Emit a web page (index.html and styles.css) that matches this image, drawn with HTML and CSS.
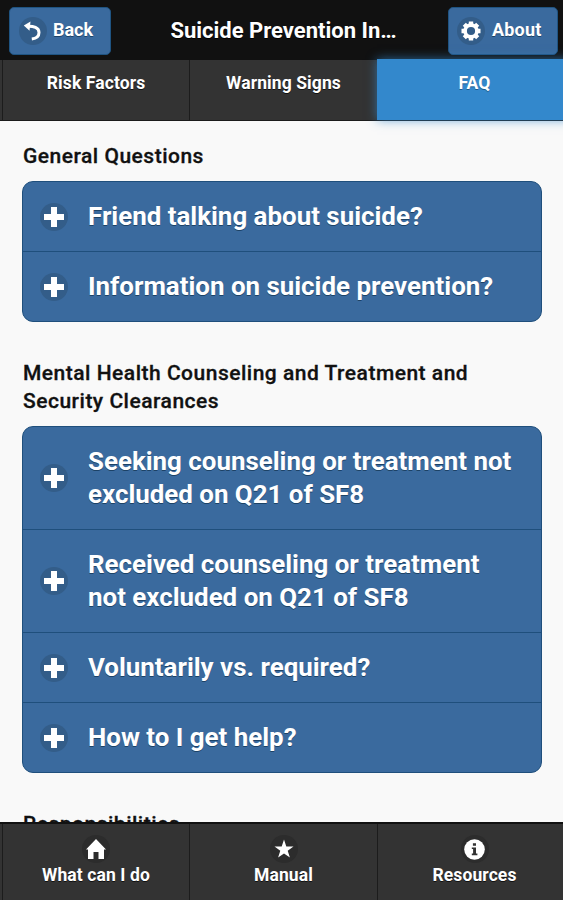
FILE: index.html
```html
<!DOCTYPE html>
<html lang="en">

<head>
    <meta charset="UTF-8">
    <meta name="viewport" content="width=device-width, initial-scale=1.0">
    <title>Suicide Prevention Information</title>
    <link rel="stylesheet" href="styles.css">
</head>

<body>
    <header class="header">
        <a class="button" href="#">
            <span class="disc">
                <svg width="20" height="20" viewBox="0 0 20 20">
                    <path d="M7.5 0.5L0.8 4.6L6.5 9.8Z" fill="#fff"/>
                    <path d="M4.5 5.2C10.5 5 16 6.5 16 11.5C16 15.5 13 17.5 8.8 18" fill="none" stroke="#fff" stroke-width="3"/>
                </svg>
            </span>
            <span>Back</span>
        </a>
        <h1 class="title">Suicide Prevention In…</h1>
        <a class="button about" href="#">
            <span class="disc">
                <svg width="20" height="20" viewBox="0 0 20 20">
                    <g stroke="#fff" stroke-width="4.4">
                        <path d="M10 0.5V4M10 16V19.5M0.5 10H4M16 10H19.5M3.3 3.3L5.8 5.8M14.2 14.2L16.7 16.7M3.3 16.7L5.8 14.2M14.2 5.8L16.7 3.3"/>
                    </g>
                    <circle cx="10" cy="10" r="5.9" fill="none" stroke="#fff" stroke-width="3.6"/>
                </svg>
            </span>
            <span>About</span>
        </a>
    </header>

    <nav class="bar tabs">
        <a class="tab" href="#">Risk Factors</a>
        <a class="tab" href="#">Warning Signs</a>
        <a class="tab active" href="#">FAQ</a>
    </nav>

    <main class="content">
        <h2 class="heading">General Questions</h2>
        <ul class="list">
            <li class="item"><span class="disc plus"></span>Friend talking about suicide?</li>
            <li class="item"><span class="disc plus"></span>Information on suicide prevention?</li>
        </ul>
        <h2 class="heading">Mental Health Counseling and Treatment and<br>Security Clearances</h2>
        <ul class="list">
            <li class="item"><span class="disc plus"></span>Seeking counseling or treatment not<br>excluded on Q21 of SF8</li>
            <li class="item"><span class="disc plus"></span>Received counseling or treatment<br>not excluded on Q21 of SF8</li>
            <li class="item"><span class="disc plus"></span>Voluntarily vs. required?</li>
            <li class="item"><span class="disc plus"></span>How to I get help?</li>
        </ul>
        <h2 class="heading">Responsibilities</h2>
    </main>

    <footer class="bar footer">
        <a class="tab" href="#">
            <span class="disc dark">
                <svg width="20" height="20" viewBox="0 0 20 20"><path d="M10 0L0 10.5H2V20H7.5V13H12.5V20H18V10.5H20Z" fill="#fff"/></svg>
            </span>
            What can I do
        </a>
        <a class="tab" href="#">
            <span class="disc dark">
                <svg width="20" height="20" viewBox="0 0 20 20"><path d="M10 0.5L12.3 7.4H19.5L13.7 11.7L15.9 18.6L10 14.4L4.1 18.6L6.3 11.7L0.5 7.4H7.7Z" fill="#fff"/></svg>
            </span>
            Manual
        </a>
        <a class="tab" href="#">
            <span class="disc dark">
                <svg width="21" height="21" viewBox="0 0 21 21">
                    <circle cx="10.5" cy="10.5" r="10.3" fill="#fff"/>
                    <path d="M8.9 4.2H12V6.8H8.9ZM7.8 8.4H12V14.6H13.4V16.2H7.8V14.6H9.1V10H7.8Z" fill="#333"/>
                </svg>
            </span>
            Resources
        </a>
    </footer>
</body>

</html>
```
FILE: styles.css
```css
* {
    box-sizing: border-box;
}

body {
    margin: 0;
    height: 900px;
    display: flex;
    flex-direction: column;
    overflow: hidden;
    background: #f9f9f9;
    color: #111;
    font-family: Roboto, sans-serif;
}

a {
    color: #fff;
    text-decoration: none;
}

.header {
    display: flex;
    align-items: flex-start;
    justify-content: space-between;
    flex: none;
    height: 60px;
    padding: 7px 5px 0 9px;
    background: #111;
}

.button {
    display: flex;
    align-items: center;
    gap: 6px;
    width: 102px;
    height: 48px;
    padding: 0 0 0 9px;
    background: #3a6a9e;
    border: 1px solid #1f5482;
    border-radius: 5px;
    font-size: 18px;
    font-weight: bold;
    line-height: 24px;
    text-shadow: 0 1px 0 #1c4266;
}

.button span + span {
    padding-bottom: 2px;
}

.about {
    width: 110px;
    gap: 7px;
    padding-left: 8px;
    letter-spacing: 0.2px;
}

.disc {
    display: flex;
    align-items: center;
    justify-content: center;
    flex: none;
    width: 28px;
    height: 28px;
    border-radius: 50%;
    background: #335d89;
}

.title {
    margin: 10px 0 0 8px;
    color: #fff;
    font-size: 22px;
    line-height: 28px;
    text-shadow: 0 1px 0 #000;
}

.bar {
    display: grid;
    grid-template-columns: 187px 188px 194px;
    flex: none;
    padding-left: 2px;
    background: #333;
}

.tabs {
    height: 61px;
    border-bottom: 1px solid #1c1c1c;
}

.tab {
    display: flex;
    flex-direction: column;
    align-items: center;
    border-left: 1px solid #1c1c1c;
    font-size: 17.5px;
    font-weight: bold;
    line-height: 24px;
    letter-spacing: 0.1px;
    text-shadow: 0 1px 0 #111;
}

.tabs .tab {
    padding-top: 11px;
}

.tabs .active {
    height: 61px;
    margin-top: -1px;
    padding-top: 12px;
    background: #3388cc;
    border-color: #3388cc;
    box-shadow: 0 0 10px rgba(51, 136, 204, 0.7);
    text-shadow: 0 1px 0 #1c5a8c;
}

.content {
    flex: 1;
    min-height: 0;
    overflow: hidden;
    padding: 21px 21px 0 22px;
}

.heading {
    margin: 0 0 11px 1px;
    font-size: 21px;
    font-weight: 500;
    line-height: 28px;
    letter-spacing: 0.5px;
    -webkit-text-stroke: 0.3px #111;
}

.list {
    margin: 0 0 37px;
    padding: 0;
    list-style: none;
    background: #3a6a9e;
    border: 1px solid #1f4f7c;
    border-radius: 11px;
}

.item {
    display: flex;
    align-items: center;
    padding: 18px 17px;
    color: #fff;
    font-size: 25.9px;
    font-weight: bold;
    line-height: 33px;
    text-shadow: 0 1px 0 #1c4266;
}

.item + .item {
    border-top: 1px solid #1f4f7c;
}

.plus {
    position: relative;
    margin-right: 20px;
}

.plus::before,
.plus::after {
    content: "";
    position: absolute;
    background: #fff;
}

.plus::before {
    width: 20px;
    height: 6px;
}

.plus::after {
    width: 6px;
    height: 20px;
}

.footer {
    height: 78px;
    border-top: 2px solid #111;
}

.footer .tab {
    padding-top: 11px;
    line-height: 25px;
}

.dark {
    background: #2c2c2c;
}
```
